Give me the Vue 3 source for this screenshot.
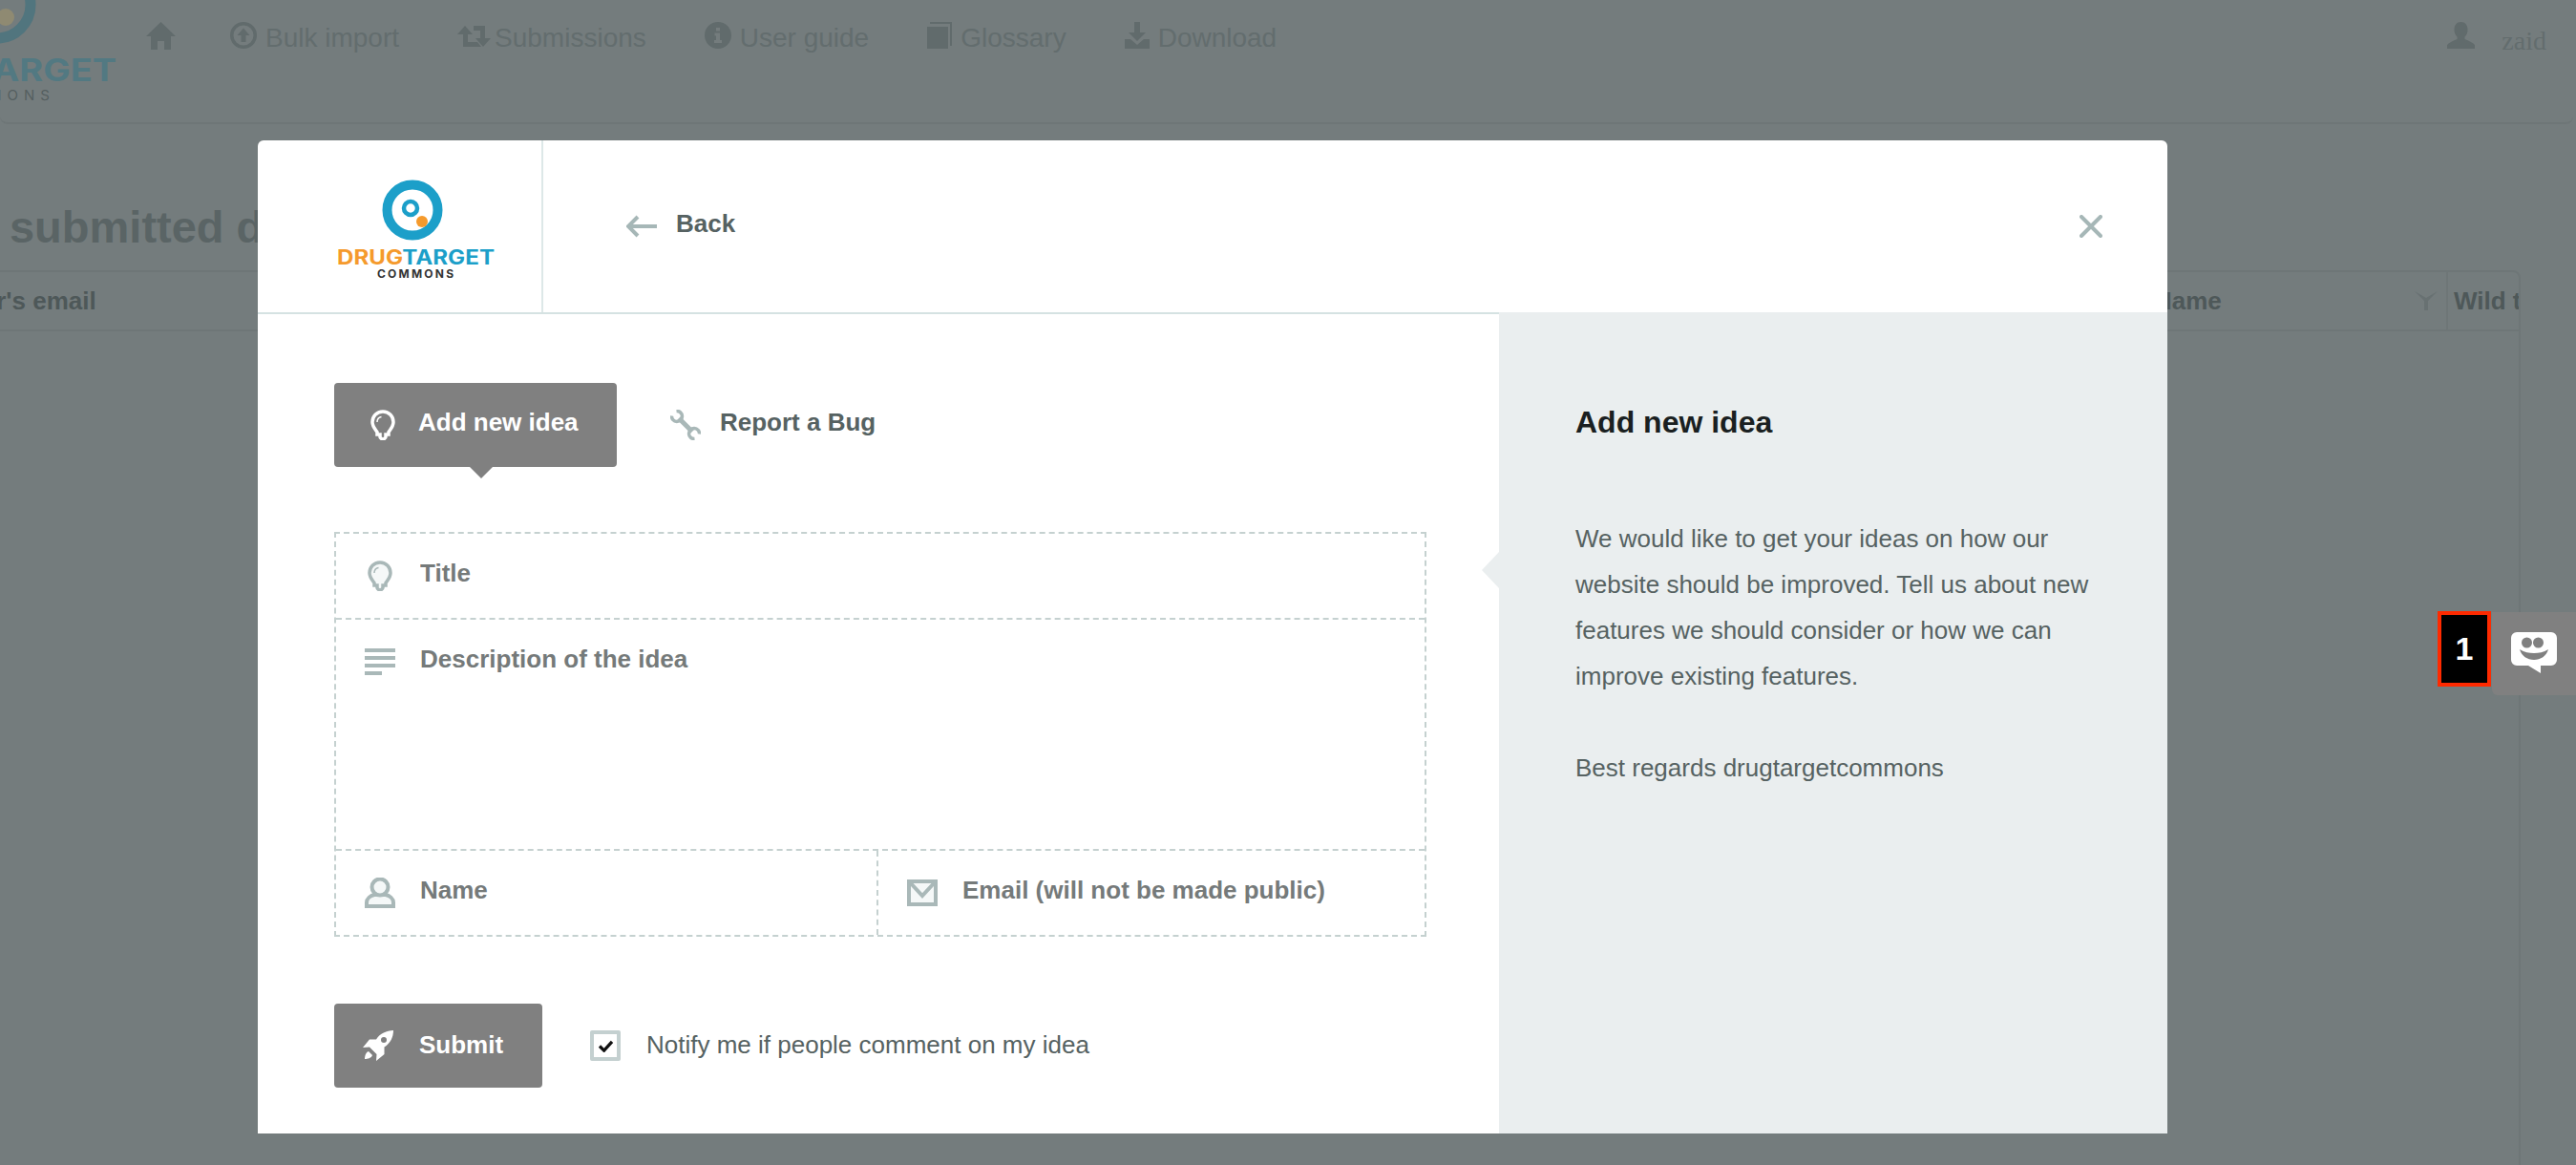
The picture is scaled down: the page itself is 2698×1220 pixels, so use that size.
<script setup>
import { ref } from 'vue';

const title = ref('');
const description = ref('');
const name = ref('');
const email = ref('');
const notify = ref(true);
</script>

<template>
  <div class="page">
    <header class="nav">
      <svg class="nav-logo" viewBox="0 0 153 112" width="153" height="112">
        <circle cx="-3" cy="5" r="35" fill="none" stroke="#51757e" stroke-width="11" />
        <circle cx="6" cy="18" r="9" fill="#8f8a72" />
        <text x="-8" y="85" class="nav-logo-main" textLength="130" lengthAdjust="spacingAndGlyphs">ARGET</text>
        <text x="58" y="105" text-anchor="end" class="nav-logo-sub">IONS</text>
      </svg>
      <a class="nav-link home">
        <svg viewBox="0 0 31 29" width="31" height="29"><path d="M15.5 0 31 15h-5v14h-7v-9h-7v9H5V15H0z" /></svg>
      </a>
      <a class="nav-link">
        <svg viewBox="0 0 28 28" width="28" height="28"><path fill-rule="evenodd" d="M14 0a14 14 0 1 0 0 28 14 14 0 0 0 0-28zm0 3.500a10.500 10.500 0 1 1 0 21 10.500 10.500 0 0 1 0-21zM14 6.500 7.500 14H11.500v7h5v-7h4z" /></svg>
        <span>Bulk import</span>
      </a>
      <a class="nav-link tight">
        <svg viewBox="0 0 35 22" width="35" height="22" class="retweet"><path d="M8 0l8 9h-5v8h10l4 5H6V9H0zM17 0h12v13h6l-8 9-8-9h5V5h-7z" /></svg>
        <span>Submissions</span>
      </a>
      <a class="nav-link">
        <svg viewBox="0 0 28 28" width="28" height="28"><path fill-rule="evenodd" d="M14 0a14 14 0 1 0 0 28 14 14 0 0 0 0-28zM12 6h4v3.500h-4zM10.500 11.500H16V19h2v3H10v-3h2v-4.500h-1.500z" /></svg>
        <span>User guide</span>
      </a>
      <a class="nav-link">
        <svg viewBox="0 0 26 28" width="26" height="28"><path d="M0 5h22v23H0zM3 0h23v25h-2V2H3z" /></svg>
        <span>Glossary</span>
      </a>
      <a class="nav-link">
        <svg viewBox="0 0 26 28" width="26" height="28"><path d="M10 0h6v11h6l-9 9-9-9h6zM0 18h6l7 6 7-6h6v10H0z" /></svg>
        <span>Download</span>
      </a>
      <div class="nav-user">
        <svg viewBox="0 0 29 28" width="29" height="28"><path d="M14.500 0c4.500 0 7 3.500 7 8 0 3-1 5.500-3 7.500v2.500c4 1.500 8.500 3.500 10.500 6v4H0v-4c2-2.500 6.500-4.500 10.500-6v-2.500c-2-2-3-4.500-3-7.500 0-4.500 2.500-8 7-8z" /></svg>
        <span>zaid</span>
      </div>
    </header>

    <main class="content">
      <h1 class="page-title">Recently submitted data</h1>
      <div class="table">
        <div class="table-head">
          <div class="cell cell-email">Submitter's email</div>
          <div class="cell cell-name">
            Name
            <svg viewBox="0 0 24 20" width="24" height="20"><path d="M0 0l10 10v10h4V10L24 0l-12 7z" /></svg>
          </div>
          <div class="cell cell-wild">Wild type</div>
        </div>
      </div>
    </main>

    <section class="modal">
      <div class="modal-head">
        <div class="modal-logo">
          <svg viewBox="0 0 170 114" width="170" height="114">
            <circle cx="82" cy="40" r="26.500" fill="none" stroke="#1c9fc9" stroke-width="10" />
            <circle cx="80" cy="38" r="7" fill="none" stroke="#1c9fc9" stroke-width="4.500" />
            <circle cx="92" cy="52" r="6" fill="#f59a2c" />
            <text x="3" y="97" class="logo-main" textLength="165" lengthAdjust="spacingAndGlyphs"><tspan fill="#f59a2c">DRUG</tspan><tspan fill="#1c9fc9">TARGET</tspan></text>
            <text x="45" y="111" class="logo-sub" textLength="80">COMMONS</text>
          </svg>
        </div>
        <a class="back">
          <svg viewBox="0 0 32 24" width="32" height="24"><path d="M12 2 2 12l10 10M2 12h30" fill="none" stroke="#a6b7b7" stroke-width="4" /></svg>
          <span>Back</span>
        </a>
        <button class="close" aria-label="Close">
          <svg viewBox="0 0 24 24" width="24" height="24"><path d="M2 2l20 20M22 2 2 22" fill="none" stroke="#a6b7b7" stroke-width="4" stroke-linecap="round" /></svg>
        </button>
      </div>

      <div class="modal-body">
        <form class="form" @submit.prevent>
          <div class="tabs">
            <button type="button" class="tab active">
              <svg viewBox="0 0 26 32" width="26" height="32"><path d="M13 2C6.500 2 2 7 2 13c0 4.500 3 7.500 5 10.500V26h3v2.500c0 1 2 2.500 3 2.500s3-1.500 3-2.500V26h3v-2.500c2-3 5-6 5-10.500C24 7 19.500 2 13 2z" fill="none" stroke="#fff" stroke-width="3.500" /><path d="M7 13c0-3 2-5 4.500-5.500" fill="none" stroke="#fff" stroke-width="1.500" /></svg>
              <span>Add new idea</span>
            </button>
            <button type="button" class="tab">
              <svg viewBox="0 0 32 32" width="32" height="32" fill="none" stroke="#a9b8b8"><path d="M9 9 23 23" stroke-width="5" /><path d="M6.500 1.500A5.500 5.500 0 1 1 1.500 6.500" stroke-width="3.500" /><path d="M30.500 25.500A5.500 5.500 0 1 0 25.500 30.500" stroke-width="3.500" /></svg>
              <span>Report a Bug</span>
            </button>
          </div>

          <div class="fields">
            <label class="field">
              <svg viewBox="0 0 26 32" width="26" height="32"><path d="M13 2C6.500 2 2 7 2 13c0 4.500 3 7.500 5 10.500V26h3v2.500c0 1 2 2.500 3 2.500s3-1.500 3-2.500V26h3v-2.500c2-3 5-6 5-10.500C24 7 19.500 2 13 2z" fill="#f5f8f8" stroke="#a9b8b8" stroke-width="3.500" /><path d="M7 13c0-3 2-5 4.500-5.500" fill="none" stroke="#a9b8b8" stroke-width="1.500" /></svg>
              <input v-model="title" placeholder="Title" />
            </label>
            <label class="field field-area">
              <svg viewBox="0 0 32 28" width="32" height="28"><path d="M0 0h32v4H0zM0 8h32v4H0zM0 16h32v4H0zM0 24h18v4H0z" fill="#a9b8b8" /></svg>
              <textarea v-model="description" placeholder="Description of the idea"></textarea>
            </label>
            <div class="field-row">
              <label class="field field-name">
                <svg viewBox="0 0 32 32" width="32" height="32"><path d="M2 30v-4c0-4 4-7 8-8h12c4 1 8 4 8 8v4z" fill="#f5f8f8" stroke="#a9b8b8" stroke-width="4" /><circle cx="16" cy="10" r="8.500" fill="#f5f8f8" stroke="#a9b8b8" stroke-width="4" /></svg>
                <input v-model="name" placeholder="Name" />
              </label>
              <label class="field field-email">
                <svg viewBox="0 0 32 28" width="32" height="28"><path d="M2 2h28v24H2z" fill="#f5f8f8" stroke="#a9b8b8" stroke-width="4" /><path d="M3 3l13 14L29 3" fill="none" stroke="#a9b8b8" stroke-width="4" /></svg>
                <input v-model="email" placeholder="Email (will not be made public)" />
              </label>
            </div>
          </div>

          <div class="actions">
            <button type="submit" class="submit">
              <svg viewBox="0 0 32 32" width="32" height="32"><path fill-rule="evenodd" d="M32 0c-7 .500-14 3-18 9.500H7L0 18l7-.500 7.500 7.500L14 32l8.500-7v-7.500C29 13.500 32 7 32 0zM22 7a3 3 0 1 1 0 6 3 3 0 0 1 0-6z" fill="#fff" /><path d="M6 22c-3 1-4 5-4 8 3 0 7-1 8-4z" fill="#fff" /></svg>
              <span>Submit</span>
            </button>
            <label class="notify">
              <input v-model="notify" type="checkbox" />
              <span class="box">
                <svg v-if="notify" viewBox="0 0 18 14" width="17" height="13"><path d="M2 7l5 5 9-10" fill="none" stroke="#111" stroke-width="3.500" /></svg>
              </span>
              <span class="notify-text">Notify me if people comment on my idea</span>
            </label>
          </div>
        </form>

        <aside class="help">
          <h2>Add new idea</h2>
          <p>We would like to get your ideas on how our website should be improved. Tell us about new features we should consider or how we can improve existing features.</p>
          <p>Best regards drugtargetcommons</p>
        </aside>
      </div>
    </section>

    <div class="feedback">
      <span class="badge">1</span>
      <button class="feedback-btn" aria-label="Feedback">
        <svg viewBox="0 0 48 43" width="48" height="43">
          <path d="M6 0h36a6 6 0 0 1 6 6v23a6 6 0 0 1-6 6H31v8L18 35H6a6 6 0 0 1-6-6V6a6 6 0 0 1 6-6z" fill="#fff" />
          <circle cx="16.500" cy="11" r="5.500" fill="#808080" />
          <circle cx="28.500" cy="11" r="5.500" fill="#808080" />
          <path d="M9 18c5 3 10 4 15 4s10-1 15-4c-2 7-8 11-15 11S11 25 9 18z" fill="#808080" />
        </svg>
      </button>
    </div>
  </div>
</template>

<style scoped>
.page {
  position: relative;
  width: 2698px;
  height: 1220px;
  overflow: hidden;
  background: #747c7d;
  font-family: 'Liberation Sans', Arial, sans-serif;
  font-size: 26px;
  color: #566262;
}

/* page behind the dialog */
.nav {
  display: flex;
  align-items: flex-start;
  gap: 61px;
  height: 128px;
  margin-right: 3px;
  border-bottom: 2px solid #6e7677;
  border-radius: 0 0 8px 8px;
  color: #636d6e;
  font-size: 28px;
}
.nav-logo {
  flex: none;
  margin-right: -61px;
}
.nav-logo-main {
  font-family: Inter, sans-serif;
  font-size: 32px;
  font-weight: 700;
  fill: #527982;
}
.nav-logo-sub {
  font-family: Inter, sans-serif;
  font-size: 15px;
  letter-spacing: 6px;
  fill: #555f60;
}
.nav-link {
  display: flex;
  align-items: flex-start;
  gap: 9px;
  padding-top: 23px;
}
.nav-link.tight {
  gap: 4px;
}
.nav-link.home {
  margin-right: -4px;
}
.nav-link svg,
.nav-user svg {
  flex: none;
  fill: #616b6c;
}
.nav-link span {
  line-height: 32px;
  margin-top: 1px;
}
.nav-link .retweet {
  margin-top: 4px;
}
.nav-user {
  display: flex;
  align-items: flex-start;
  gap: 28px;
  margin-left: auto;
  padding: 23px 28px 0 0;
  font-family: 'Liberation Serif', serif;
}
.nav-user span {
  line-height: 32px;
  margin-top: 4px;
}

.content {
  padding-top: 80px;
}
.page-title {
  margin: 0 0 0 -199px;
  font-size: 47px;
  line-height: 56px;
  font-weight: 700;
  color: #5a6465;
  white-space: nowrap;
}
.table {
  width: 2796px;
  height: 1000px;
  margin: 17px 0 0 -160px;
  border: 2px solid #6e7677;
  border-radius: 8px;
}
.table-head {
  display: flex;
  height: 60px;
  border-bottom: 2px solid #6e7677;
  font-weight: 700;
  color: #4e5859;
}
.cell {
  display: flex;
  align-items: center;
  justify-content: space-between;
  padding: 0 9px 0 14px;
  white-space: nowrap;
}
.cell svg {
  fill: #687172;
}
.cell-email {
  flex: 1;
  padding-left: 43px;
}
.cell-name {
  flex: none;
  width: 322px;
  box-sizing: border-box;
  border-right: 2px solid #6e7677;
}
.cell-wild {
  flex: none;
  width: 74px;
  box-sizing: border-box;
  overflow: hidden;
  padding: 0 0 0 6px;
}

/* dialog */
.modal {
  position: absolute;
  top: 147px;
  left: 270px;
  display: flex;
  flex-direction: column;
  width: 2000px;
  height: 1040px;
  overflow: hidden;
  background: #fff;
  border-radius: 6px 6px 0 0;
}
.modal-head {
  display: flex;
  align-items: center;
  flex: none;
  height: 180px;
}
.modal-logo {
  display: flex;
  align-items: center;
  align-self: stretch;
  width: 299px;
  box-sizing: border-box;
  padding-left: 80px;
  border-right: 2px solid #dde8e8;
}
.logo-main {
  font-family: Inter, sans-serif;
  font-size: 21px;
  font-weight: 700;
}
.logo-sub {
  font-family: Inter, sans-serif;
  font-size: 12px;
  font-weight: 700;
  fill: #333;
}
.back {
  display: flex;
  align-items: center;
  gap: 20px;
  margin-left: 87px;
  font-weight: 700;
}
.back span {
  margin-top: -6px;
}
.close {
  display: flex;
  margin-left: auto;
  margin-right: 68px;
  padding: 0;
  border: 0;
  background: none;
}
.modal-body {
  display: flex;
  flex: 1;
  min-height: 0;
}
.form {
  flex: none;
  width: 1300px;
  box-sizing: border-box;
  padding: 72px 76px 0 80px;
  border-top: 2px solid #d5e2e2;
}
.tabs {
  display: flex;
}
.tab {
  position: relative;
  display: flex;
  align-items: center;
  gap: 24px;
  height: 88px;
  padding: 0 38px;
  border: 0;
  border-radius: 4px;
  background: none;
  color: #566262;
  font: 700 26px 'Liberation Sans', Arial, sans-serif;
}
.tab span {
  margin-top: -6px;
}
.tab.active {
  width: 296px;
  box-sizing: border-box;
  margin-right: 18px;
  background: #808080;
  color: #fff;
}
.tab.active::after {
  content: '';
  position: absolute;
  left: 142px;
  top: 88px;
  border: 12px solid transparent;
  border-bottom: 0;
  border-top-color: #808080;
}
.tab:not(.active) {
  gap: 20px;
}
.fields {
  box-sizing: border-box;
  height: 424px;
  margin-top: 68px;
  border: 2px dashed #c5d1d0;
}
.field {
  display: flex;
  align-items: center;
  box-sizing: border-box;
  height: 90px;
  padding-left: 30px;
  border-bottom: 2px dashed #c5d1d0;
}
.field svg {
  flex: none;
  width: 32px;
}
.field input,
.field textarea {
  flex: 1;
  min-width: 0;
  margin: 0 0 6px 26px;
  padding: 0;
  border: 0;
  outline: 0;
  background: none;
  color: #566262;
  font: 700 26px 'Liberation Sans', Arial, sans-serif;
}
.field input::placeholder,
.field textarea::placeholder {
  color: #757a7a;
  opacity: 1;
}
.field-area {
  align-items: flex-start;
  height: 242px;
  padding-top: 30px;
}
.field-area textarea {
  height: 180px;
  margin-bottom: 0;
  margin-top: -5px;
  line-height: 32px;
  resize: none;
}
.field-row {
  display: flex;
  height: 88px;
}
.field-row .field {
  height: 88px;
  border-bottom: 0;
}
.field-name {
  width: 568px;
  border-right: 2px dashed #c5d1d0;
}
.field-email {
  flex: 1;
}
.actions {
  display: flex;
  align-items: center;
  gap: 50px;
  margin-top: 70px;
}
.submit {
  display: flex;
  align-items: center;
  gap: 27px;
  width: 218px;
  height: 88px;
  box-sizing: border-box;
  padding: 0 0 0 30px;
  border: 0;
  border-radius: 4px;
  background: #808080;
  color: #fff;
  font: 700 26px 'Liberation Sans', Arial, sans-serif;
}
.submit span,
.notify-text {
  margin-top: -2px;
}
.notify {
  display: flex;
  align-items: center;
  gap: 27px;
}
.notify input {
  display: none;
}
.box {
  display: flex;
  align-items: center;
  justify-content: center;
  width: 32px;
  height: 32px;
  box-sizing: border-box;
  border: 4px solid #c4d0d0;
  border-radius: 2px;
}
.help {
  position: relative;
  flex: 1;
  box-sizing: border-box;
  padding: 91px 80px 0;
  background: #eaeeef;
  line-height: 48px;
}
.help::before {
  content: '';
  position: absolute;
  left: -18px;
  top: 251px;
  border: 19px solid transparent;
  border-left: 0;
  border-right: 18px solid #eaeeef;
}
.help h2 {
  margin: 0 0 74px;
  font-size: 32px;
  line-height: 48px;
  font-weight: 700;
  color: #1a1f21;
}
.help p {
  margin: 0 0 48px;
}

/* floating feedback tab */
.feedback {
  position: absolute;
  top: 640px;
  right: 0;
  display: flex;
  align-items: flex-start;
}
.badge {
  width: 56px;
  height: 79px;
  box-sizing: border-box;
  border: 4px solid #ff2a00;
  background: #000;
  color: #fff;
  font-size: 34px;
  font-weight: 700;
  line-height: 71px;
  text-align: center;
}
.feedback-btn {
  display: flex;
  width: 88px;
  height: 87px;
  box-sizing: border-box;
  margin: 1px 0 0 1px;
  padding: 21px 0 0 20px;
  border: 0;
  border-radius: 0 0 0 6px;
  background: #808080;
}
</style>

<style>
html,
body {
  margin: 0;
  overflow: hidden;
}
</style>
